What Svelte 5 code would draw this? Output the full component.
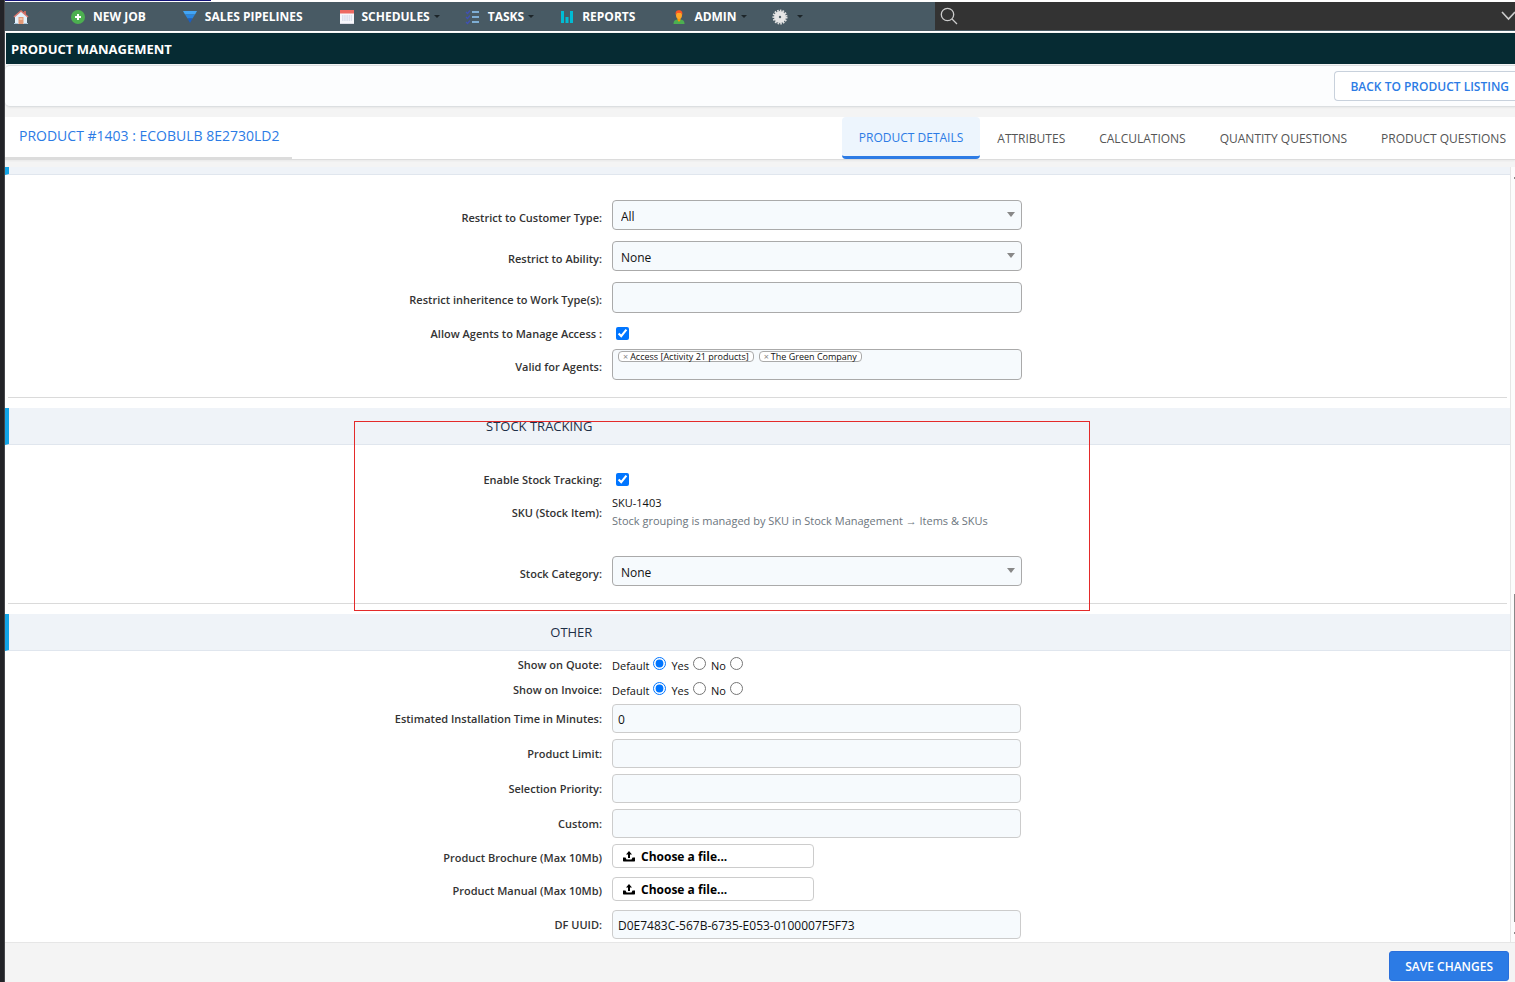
<script>
  let customerType = $state('All');
  let ability = $state('None');
  let stockCategory = $state('None');
  let manageAccess = $state(true);
  let stockTracking = $state(true);
  let agents = $state(['Access [Activity 21 products]', 'The Green Company']);
  let choices = $state({ quote: 'Default', invoice: 'Default' });
  let activeTab = $state('Product Details');

  const menu = [
    { icon: 'home', label: '' },
    { icon: 'plus', label: 'New Job' },
    { icon: 'funnel', label: 'Sales Pipelines' },
    { icon: 'calendar', label: 'Schedules', caret: true },
    { icon: 'tasks', label: 'Tasks', caret: true },
    { icon: 'chart', label: 'Reports' },
    { icon: 'user', label: 'Admin', caret: true },
    { icon: 'gear', label: '', caret: true }
  ];

  const tabs = ['Product Details', 'Attributes', 'Calculations', 'Quantity Questions', 'Product Questions'];

  const radioRows = [
    { key: 'quote', label: 'Show on Quote:' },
    { key: 'invoice', label: 'Show on Invoice:' }
  ];

  let textRows = $state([
    { id: 'install-time', label: 'Estimated Installation Time in Minutes:', value: '0' },
    { id: 'limit', label: 'Product Limit:', value: '' },
    { id: 'priority', label: 'Selection Priority:', value: '' },
    { id: 'custom', label: 'Custom:', value: '' }
  ]);

  const fileRows = [
    { id: 'brochure', label: 'Product Brochure (Max 10Mb)' },
    { id: 'manual', label: 'Product Manual (Max 10Mb)' }
  ];

  let uuid = $state('D0E7483C-567B-6735-E053-0100007F5F73');
</script>

{#snippet icon(name)}
  <svg class="icon" viewBox="0 0 16 16" width="16" height="16" aria-hidden="true">
    {#if name === 'home'}
      <path d="M2 7 8 2l6 5v8H2z" fill="#e3f0fa" />
      <path d="M11 2h2v4l-2-2z" fill="#c9655c" />
      <path d="M1 8 8 2l7 6" fill="none" stroke="#d9776e" stroke-width="1.6" />
      <path d="M5.5 8h5v7h-5z" fill="#e59a77" />
      <path d="M6.5 9h3v2h-3z" fill="#f3c0a5" />
      <path d="M1 14h4v1H1zM11 14h4v1h-4z" fill="#a9c5db" />
    {:else if name === 'plus'}
      <circle cx="8" cy="8" r="7" fill="#4caf50" />
      <path d="M8 5v6M5 8h6" stroke="#fff" stroke-width="2" />
    {:else if name === 'funnel'}
      <path d="M1 2h14l-2 3.5H3z" fill="#42a5f5" />
      <path d="M3 5.5h10L10.500 9.500h-5z" fill="#2a86e0" />
      <path d="M5.500 9.500h5L8 14z" fill="#1a5fc4" />
    {:else if name === 'calendar'}
      <path d="M1 1h14v14H1z" fill="#f7f7fb" />
      <path d="M1 1h14v3.500H1z" fill="#ee6a62" />
      <path d="M3 7h10M3 9h10M3 11h10" stroke="#c3cbe0" stroke-dasharray="1.500 .7" />
      <path d="M1 14.500h14" stroke="#dcdce6" />
    {:else if name === 'tasks'}
      <path d="M7 3h7M7 8h7M7 13h7" stroke="#90caf9" stroke-width="1.600" />
      <path d="m1 3 1.500 1.500L5 1.500M1 8l1.500 1.500L5 6.500M1 13l1.500 1.500L5 11.500" fill="none" stroke="#3f51b5" stroke-width="1.300" />
    {:else if name === 'chart'}
      <path d="M2 2h3v12H2zM6.500 8h3v6h-3zM11 2h3v12h-3z" fill="#00bcd4" />
    {:else if name === 'user'}
      <path d="M2.500 15c0-4 2.500-4.500 5.500-4.500s5.500.5 5.500 4.500z" fill="#4caf50" />
      <path d="M6.500 9h3v2L8 13l-1.500-2z" fill="#ff9800" />
      <ellipse cx="8" cy="6" rx="3" ry="4" fill="#ffa726" />
      <path d="M4.800 6C4 2.500 5.800 1.200 8 1.200c2.500 0 4 1.800 3.200 4.800L10 4H6z" fill="#ff5722" />
    {:else if name === 'gear'}
      <circle cx="8" cy="8" r="6.500" fill="none" stroke="#e0e0e0" stroke-width="2" stroke-dasharray="1.600 1.100" />
      <circle cx="8" cy="8" r="6" fill="#e6e6e6" />
      <circle cx="8" cy="8" r="1.200" fill="#56656d" />
    {/if}
  </svg>
{/snippet}

<div class="page">
  <aside class="edge"></aside>

  <div class="app">
    <div class="loading"><span></span></div>
    <nav class="menu">
      <ul>
        {#each menu as item}
          <li>
            <a href="#{item.icon}" class:with-caret={item.caret} aria-label={item.label || item.icon}>
              {@render icon(item.icon)}
              {#if item.label}<span>{item.label}</span>{/if}
              {#if item.caret}<i class="caret"></i>{/if}
            </a>
          </li>
        {/each}
      </ul>
      <div class="search">
        <button aria-label="Search">
          <svg viewBox="0 0 18 18" width="18" height="18" fill="none" stroke="#ccc" stroke-width="1.300">
            <circle cx="7.500" cy="7.500" r="6.200" />
            <path d="m12 12 5 5" />
          </svg>
        </button>
        <button aria-label="Expand">
          <svg viewBox="0 0 14 10" width="14" height="10" fill="none" stroke="#ccc" stroke-width="1.600">
            <path d="m1 1 6.500 7L14 1" />
          </svg>
        </button>
      </div>
    </nav>

    <h1>Product Management</h1>

    <div class="toolbar">
      <a class="back" href="#listing">Back to Product Listing</a>
    </div>

    <header class="product">
      <h2>Product #1403 : EcoBulb 8E2730LD2</h2>
      <div class="tabs" role="tablist">
        {#each tabs as tab}
          <button role="tab" aria-selected={activeTab === tab} class:active={activeTab === tab} onclick={() => (activeTab = tab)}>
            {tab}
          </button>
        {/each}
      </div>
    </header>

    <main>
      <form id="product-form">
        <div class="section-tail"></div>

        <section class="access">
          <div class="row">
            <label for="customer-type">Restrict to Customer Type:</label>
            <div class="control select">
              <select id="customer-type" bind:value={customerType}>
                <option>All</option>
              </select>
            </div>
          </div>
          <div class="row">
            <label for="ability">Restrict to Ability:</label>
            <div class="control select">
              <select id="ability" bind:value={ability}>
                <option>None</option>
              </select>
            </div>
          </div>
          <div class="row">
            <label for="work-types">Restrict inheritence to Work Type(s):</label>
            <div class="control">
              <input id="work-types" class="multi" type="text" />
            </div>
          </div>
          <div class="row check">
            <label for="manage-access">Allow Agents to Manage Access :</label>
            <div class="control">
              <input id="manage-access" type="checkbox" bind:checked={manageAccess} />
            </div>
          </div>
          <div class="row">
            <span class="label" id="agents-label">Valid for Agents:</span>
            <div class="control">
              <div class="multi tags" role="group" aria-labelledby="agents-label">
                {#each agents as agent}
                  <span class="tag">
                    <button type="button" aria-label="Remove {agent}" onclick={() => (agents = agents.filter((a) => a !== agent))}>×</button>
                    {agent}
                  </span>
                {/each}
              </div>
            </div>
          </div>
        </section>
        <hr />

        <section class="stock">
          <h3><span>Stock Tracking</span></h3>
          <div class="row check">
            <label for="stock-tracking">Enable Stock Tracking:</label>
            <div class="control">
              <input id="stock-tracking" type="checkbox" bind:checked={stockTracking} />
            </div>
          </div>
          <div class="row sku">
            <span class="label">SKU (Stock Item):</span>
            <div class="control">
              <div>SKU-1403</div>
              <small>Stock grouping is managed by SKU in Stock Management → Items &amp; SKUs</small>
            </div>
          </div>
          <div class="row">
            <label for="stock-category">Stock Category:</label>
            <div class="control select">
              <select id="stock-category" bind:value={stockCategory}>
                <option>None</option>
              </select>
            </div>
          </div>
          <div class="highlight"></div>
        </section>
        <hr />

        <section class="other">
          <h3><span>Other</span></h3>
          {#each radioRows as row}
            <div class="row radios">
              <span class="label" id="{row.key}-label">{row.label}</span>
              <div class="control" role="radiogroup" aria-labelledby="{row.key}-label">
                {#each ['Default', 'Yes', 'No'] as option}
                  <label>
                    <span>{option}</span>
                    <input type="radio" name={row.key} value={option} bind:group={choices[row.key]} />
                  </label>
                {/each}
              </div>
            </div>
          {/each}
          {#each textRows as row}
            <div class="row text">
              <label for={row.id}>{row.label}</label>
              <div class="control">
                <input id={row.id} type="text" bind:value={row.value} />
              </div>
            </div>
          {/each}
          {#each fileRows as row}
            <div class="row file">
              <label for={row.id}>{row.label}</label>
              <div class="control">
                <button type="button" id={row.id}>
                  <svg viewBox="0 0 12 12" width="12" height="12" aria-hidden="true">
                    <path d="M6 1 3 4.500h2V8h2V4.500h2z" />
                    <path d="M0 7.500h2.500l1 2h5l1-2H12V11l-.5.500H.5L0 11z" />
                  </svg>
                  Choose a file...
                </button>
              </div>
            </div>
          {/each}
          <div class="row text">
            <label for="uuid">DF UUID:</label>
            <div class="control">
              <input id="uuid" type="text" bind:value={uuid} />
            </div>
          </div>
        </section>
      </form>
      <div class="scrollbar"><span class="up"></span><span class="thumb"></span><span class="down"></span></div>
    </main>

    <footer>
      <button form="product-form" type="button">Save Changes</button>
    </footer>
  </div>
</div>

<style>
  :global(body) {
    margin: 0;
    background: #f4f4f4;
  }

  .page {
    display: flex;
    min-height: 100vh;
    overflow: hidden;
    font-family: 'Open Sans', 'Noto Sans', sans-serif;
    font-size: 11px;
    color: #111;
  }
  .page :is(button, input, select) {
    font-family: inherit;
    box-sizing: border-box;
  }

  .edge {
    flex: 0 0 4px;
    background: #222327;
    border-right: 1px solid #45464a;
  }
  .app {
    flex: 1;
    min-width: 0;
    display: flex;
    flex-direction: column;
  }

  .loading {
    height: 2px;
    background: #fff;
  }
  .loading span {
    display: block;
    width: 206px;
    height: 1px;
    background: #14147a;
  }

  /* Top menu */
  .menu {
    display: flex;
    height: 29px;
    background: #485a64;
    border-bottom: 1px solid #fff;
  }
  .menu ul {
    display: flex;
    align-items: center;
    width: 930px;
    margin: 0;
    padding: 0 0 0 8px;
    box-sizing: border-box;
    list-style: none;
  }
  .menu li {
    margin-right: 36px;
  }
  .menu li:has(.with-caret) {
    margin-right: 25px;
  }
  .menu li:first-child {
    margin-right: 41px;
  }
  .menu a {
    display: flex;
    align-items: center;
    color: #fff;
    font-size: 12px;
    font-weight: 700;
    text-decoration: none;
    text-transform: uppercase;
  }
  .menu a span {
    margin-left: 7px;
  }
  .icon {
    display: block;
  }
  .caret {
    margin-left: 4px;
    border: 3px solid transparent;
    border-top-color: #1c2529;
    border-bottom: 0;
  }
  .icon + .caret {
    margin-left: 9px;
  }
  .search {
    flex: 1;
    display: flex;
    align-items: center;
    justify-content: space-between;
    padding-left: 5px;
    margin-bottom: 1px;
    background: #333;
  }
  .search button {
    display: flex;
    padding: 0;
    border: 0;
    background: none;
  }

  h1 {
    margin: 1px 0 0 1px;
    padding: 1px 0 0 5px;
    background: #062b33;
    color: #fff;
    font-size: 13px;
    font-weight: 700;
    line-height: 30px;
    text-transform: uppercase;
  }

  .toolbar {
    display: flex;
    justify-content: flex-end;
    height: 42px;
    margin: 1px 0 10px;
    padding-top: 5px;
    box-sizing: border-box;
    background: #fcfdfe;
    border-top: 1px solid #dcdfe1;
    border-bottom: 1px solid #dcdfe1;
    border-radius: 5px 0 0 5px;
    box-shadow: 0 1px 2px #0000000d;
  }
  .back {
    height: 28px;
    padding: 0 6px 0 15px;
    border: 1px solid #c8d1dc;
    border-right: 0;
    border-radius: 4px 0 0 4px;
    background: #fff;
    color: #2c7be5;
    font-size: 12px;
    font-weight: 600;
    line-height: 29px;
    text-decoration: none;
    text-transform: uppercase;
  }

  .product {
    display: flex;
    justify-content: space-between;
    margin-bottom: 7px;
    background: #fff;
    border-bottom: 1px solid #dcdcdc;
    box-shadow: 0 1px 2px #0000000d;
  }
  h2 {
    margin: 0;
    padding: 0 12px 0 14px;
    border-bottom: 2px solid #dcdcdc;
    color: #2c7be5;
    font-size: 14px;
    font-weight: 500;
    line-height: 38px;
    text-transform: uppercase;
  }
  .tabs {
    display: flex;
  }
  .tabs button {
    height: 42px;
    padding: 1px 17px 0;
    border: 0;
    background: none;
    color: #555;
    font-size: 12px;
    text-transform: uppercase;
  }
  .tabs button:last-child {
    padding-right: 9px;
  }
  .tabs .active {
    background: #edf5fd;
    border-bottom: 3px solid #2c7be5;
    border-radius: 4px;
    color: #2c7be5;
  }

  /* Form */
  main {
    flex: 1;
    display: flex;
    background: #fff;
    border-bottom: 1px solid #e6e6e6;
  }
  form {
    flex: 1;
    border-right: 1px solid #e6e6e6;
  }
  .section-tail {
    height: 7px;
    background: #eff3f8;
    border-bottom: 1px solid #e0e6ee;
    border-left: 4px solid #12a5e8;
  }
  .access {
    padding-top: 25px;
  }
  .stock {
    position: relative;
  }
  h3 {
    display: flex;
    height: 36px;
    margin: 0;
    background: #eff3f8;
    border-bottom: 1px solid #e0e6ee;
    border-left: 4px solid #12a5e8;
    color: #1e2f47;
    font-size: 13px;
    font-weight: 500;
    line-height: 37px;
    text-transform: uppercase;
  }
  h3 span {
    width: 39%;
    padding-right: 2px;
    box-sizing: border-box;
    text-align: right;
  }
  hr {
    height: 1px;
    margin: 17px 3px 10px;
    border: 0;
    background: #dadada;
  }

  .row {
    display: flex;
    align-items: center;
    margin-bottom: 11px;
  }
  .row > label,
  .row > .label {
    width: 40%;
    padding: 4px 5px 0 0;
    box-sizing: border-box;
    color: #333;
    font-weight: 600;
    line-height: 15px;
    text-align: right;
  }
  .control {
    flex: 1;
    padding-left: 5px;
  }
  .select {
    position: relative;
  }
  .select::after {
    content: '';
    position: absolute;
    top: 12px;
    left: 400px;
    border: 4px solid transparent;
    border-top: 5px solid #888;
    border-bottom: 0;
    pointer-events: none;
  }
  select,
  input[type='text'],
  .multi {
    display: block;
    width: 410px;
    height: 30px;
    padding: 2px 8px 0;
    border: 1px solid #aaa;
    border-radius: 4px;
    background: #f6fafd;
    color: #111;
    font-size: 12px;
    appearance: none;
  }
  .row .multi {
    height: 31px;
    box-sizing: border-box;
  }
  .row.check {
    height: 36px;
    margin: -11px 0 0;
    padding-top: 4px;
    box-sizing: border-box;
  }
  .row.check > label {
    padding-top: 1px;
  }
  input[type='checkbox'] {
    display: block;
    width: 13px;
    height: 13px;
    margin: 4px;
    accent-color: #0075ff;
  }
  .tags {
    display: flex;
    align-items: flex-start;
    gap: 5px;
    padding: 1px 5px;
  }
  .tag {
    display: flex;
    align-items: center;
    gap: 2px;
    height: 9px;
    padding: 0 4px;
    border: 1px solid #aaa;
    border-radius: 4px;
    background: #fff;
    font-size: 9px;
    line-height: 9px;
  }
  .tag button {
    padding: 0;
    border: 0;
    background: none;
    color: #888;
    font-size: 9px;
    line-height: 9px;
  }

  .stock .row.check {
    margin: 14px 0 -1px;
  }
  .sku {
    height: 36px;
    margin-bottom: 26px;
  }
  .row.sku > .label {
    padding-top: 0;
  }
  .sku .control {
    line-height: 18px;
  }
  .sku small {
    color: #6c757d;
    font-size: 11px;
  }
  .highlight {
    position: absolute;
    z-index: 1;
    top: 13px;
    left: 349px;
    width: 736px;
    height: 190px;
    box-sizing: border-box;
    border: 1px solid #e42a2a;
    pointer-events: none;
  }

  .radios {
    height: 25px;
    margin: 0;
  }
  .row.radios > .label {
    padding-top: 2px;
  }
  .radios .control {
    display: flex;
    gap: 5px;
  }
  .radios label {
    display: flex;
    gap: 4px;
    line-height: 15px;
  }
  .radios label span {
    padding-top: 4px;
  }
  input[type='radio'] {
    width: 13px;
    height: 13px;
    margin: 3px 0;
    accent-color: #0075ff;
  }
  .text {
    margin: 3px 0 6px;
  }
  .text:last-child {
    margin-bottom: 3px;
  }
  .row.text > label {
    padding-top: 0;
  }
  .text input[type='text'] {
    width: 409px;
    height: 29px;
    padding: 2px 5px 0;
    border-color: #ccc;
  }
  .file {
    margin-bottom: 9px;
  }
  .row.file > label {
    padding-top: 2px;
  }
  .file button {
    display: flex;
    align-items: center;
    gap: 6px;
    width: 202px;
    height: 24px;
    padding: 0 10px;
    border: 1px solid #ccc;
    border-radius: 4px;
    background: #fff;
    color: #000;
    font-size: 12px;
    font-weight: 700;
  }

  /* Slice of the pane's scrollbar that shows at the window edge */
  .scrollbar {
    display: flex;
    flex-direction: column;
    align-items: flex-end;
    width: 4px;
    padding: 10px 0 8px;
    background: #fcfcfc;
  }
  .scrollbar span {
    width: 1px;
    background: #888;
  }
  .up,
  .down {
    height: 2px;
  }
  .thumb {
    height: 328px;
    margin: auto 0 10px;
  }

  footer {
    display: flex;
    justify-content: flex-end;
    padding: 8px 6px 1px;
    background: #f4f4f4;
  }
  footer button {
    height: 30px;
    padding: 0 15px;
    border: 1px solid #2a6fdb;
    border-radius: 3px;
    background: #2c7be5;
    color: #fff;
    font-size: 12px;
    font-weight: 600;
    text-transform: uppercase;
  }
</style>
